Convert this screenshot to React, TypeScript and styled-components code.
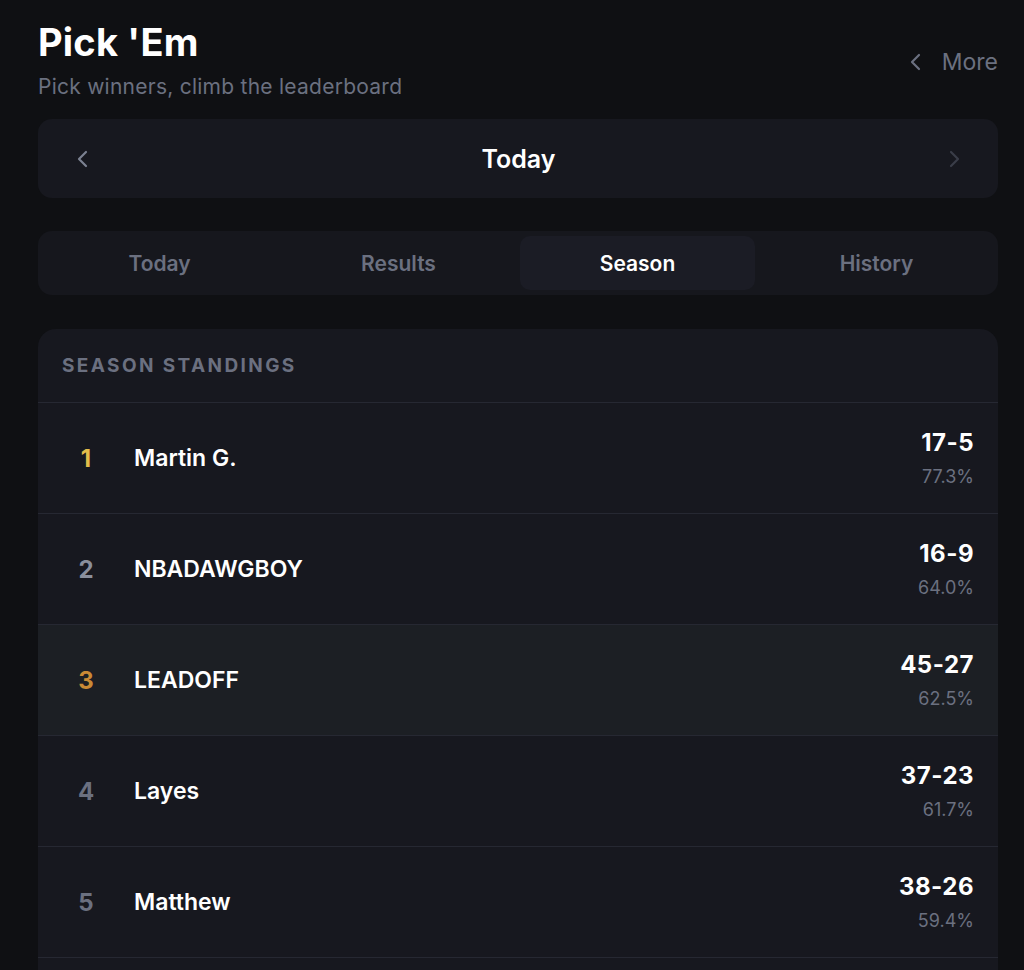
import React from "react";
import styled, { createGlobalStyle } from "styled-components";

const Global = createGlobalStyle`
  html, body { margin: 0; padding: 0; background: #0f1013; }
  body { font-family: "Inter", "Noto Sans", sans-serif; color: #fff; }
  * { box-sizing: border-box; }
`;

const Page = styled.div`
  width: 1024px;
  height: 970px;
  padding: 20px 26px 0 38px;
  display: flex;
  flex-direction: column;
  background: #0f1013;
  overflow: hidden;
`;

const Header = styled.div`
  display: flex;
  justify-content: space-between;
  align-items: flex-start;
`;

const TitleBlock = styled.div`
  display: flex;
  flex-direction: column;
`;

const Title = styled.h1`
  margin: 0;
  font-size: 38px;
  font-weight: 700;
  letter-spacing: 0.2px;
  line-height: 44px;
  color: #fff;
`;

const Subtitle = styled.div`
  margin-top: 10px;
  font-size: 21px;
  letter-spacing: 0.25px;
  line-height: 26px;
  color: #6b7080;
`;

const MoreButton = styled.div`
  display: flex;
  align-items: center;
  gap: 14px;
  margin-top: 27px;
  color: #6b7080;
  font-size: 23px;
  line-height: 30px;
`;

const NavCard = styled.div`
  margin-top: 19px;
  height: 79px;
  border-radius: 14px;
  background: #17181f;
  display: flex;
  align-items: center;
  justify-content: space-between;
  padding: 0 32px 0 33px;
`;

const NavTitle = styled.div`
  font-size: 25px;
  font-weight: 600;
  color: #fff;
`;

const Tabs = styled.div`
  margin-top: 33px;
  height: 64px;
  border-radius: 14px;
  background: #16171d;
  display: grid;
  grid-template-columns: repeat(4, 1fr);
  padding: 5px 4px;
  gap: 4px;
`;

const Tab = styled.div<{ $active?: boolean }>`
  display: flex;
  align-items: center;
  justify-content: center;
  border-radius: 10px;
  font-size: 21px;
  font-weight: 600;
  color: ${(p) => (p.$active ? "#ffffff" : "#6b7080")};
  background: ${(p) => (p.$active ? "#1b1c25" : "transparent")};
`;

const Standings = styled.div`
  margin-top: 34px;
  border-radius: 18px 18px 0 0;
  background: #17181f;
  flex: 1;
  overflow: hidden;
`;

const StandingsHeader = styled.div`
  height: 74px;
  padding: 0 24px;
  display: flex;
  align-items: center;
  font-size: 19px;
  font-weight: 700;
  letter-spacing: 2.4px;
  color: #6b7080;
  border-bottom: 1.5px solid #262832;
`;

const Row = styled.div<{ $highlight?: boolean }>`
  height: 111px;
  display: flex;
  align-items: center;
  padding: 0 24px 0 24px;
  border-bottom: 1.5px solid #262832;
  background: ${(p) => (p.$highlight ? "#1c1f24" : "transparent")};
`;

const Rank = styled.div<{ $color: string }>`
  width: 48px;
  text-align: center;
  font-size: 24px;
  font-weight: 700;
  color: ${(p) => p.$color};
`;

const Name = styled.div`
  margin-left: 24px;
  flex: 1;
  font-size: 23px;
  font-weight: 600;
  color: #fff;
`;

const Stats = styled.div`
  display: flex;
  flex-direction: column;
  align-items: flex-end;
  gap: 9px;
`;

const Record = styled.div`
  font-size: 24px;
  font-weight: 700;
  letter-spacing: 0.5px;
  color: #fff;
  line-height: 28px;
`;

const Pct = styled.div`
  font-size: 18px;
  color: #6b7080;
  line-height: 22px;
`;

const Chevron = ({ dir, color, size = 22 }: { dir: "left" | "right"; color: string; size?: number }) => (
  <svg width={size} height={size} viewBox="0 0 24 24" fill="none" stroke={color} strokeWidth={2.2} strokeLinecap="round" strokeLinejoin="round">
    {dir === "left" ? <polyline points="15 5 8 12 15 19" /> : <polyline points="9 5 16 12 9 19" />}
  </svg>
);

const rows = [
  { rank: 1, name: "Martin G.", rec: "17-5", pct: "77.3%", color: "#e3bd4a" },
  { rank: 2, name: "NBADAWGBOY", rec: "16-9", pct: "64.0%", color: "#8a8f9c" },
  { rank: 3, name: "LEADOFF", rec: "45-27", pct: "62.5%", color: "#c98a35", hl: true },
  { rank: 4, name: "Layes", rec: "37-23", pct: "61.7%", color: "#6b7080" },
  { rank: 5, name: "Matthew", rec: "38-26", pct: "59.4%", color: "#6b7080" },
  { rank: 6, name: "", rec: "", pct: "", color: "#6b7080" },
];

export default function App() {
  return (
    <>
      <Global />
      <Page>
        <Header>
          <TitleBlock>
            <Title>Pick 'Em</Title>
            <Subtitle>Pick winners, climb the leaderboard</Subtitle>
          </TitleBlock>
          <MoreButton>
            <Chevron dir="left" color="#6b7080" size={24} />
            More
          </MoreButton>
        </Header>
        <NavCard>
          <Chevron dir="left" color="#7b8191" size={24} />
          <NavTitle>Today</NavTitle>
          <Chevron dir="right" color="#3a3d48" size={24} />
        </NavCard>
        <Tabs>
          <Tab>Today</Tab>
          <Tab>Results</Tab>
          <Tab $active>Season</Tab>
          <Tab>History</Tab>
        </Tabs>
        <Standings>
          <StandingsHeader>SEASON STANDINGS</StandingsHeader>
          {rows.map((r) => (
            <Row key={r.rank} $highlight={r.hl}>
              <Rank $color={r.color}>{r.name ? r.rank : ""}</Rank>
              <Name>{r.name}</Name>
              <Stats>
                <Record>{r.rec}</Record>
                <Pct>{r.pct}</Pct>
              </Stats>
            </Row>
          ))}
        </Standings>
      </Page>
    </>
  );
}
